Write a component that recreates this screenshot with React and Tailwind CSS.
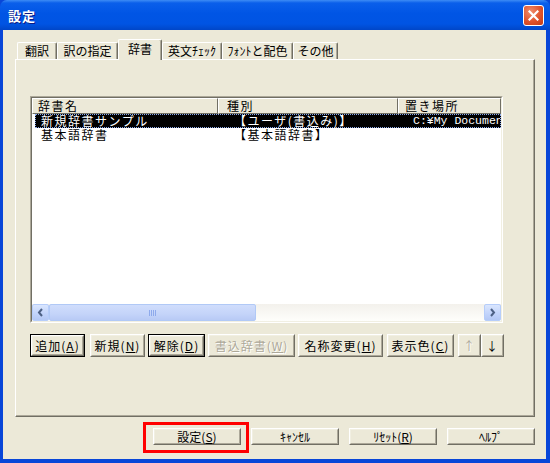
const FONT = "font-['Noto_Sans_CJK_JP','Liberation_Sans',sans-serif]"

const Raised = ({ className = '', dark = false, children }) => (
  <div className={`${dark ? 'border border-black' : ''} ${className}`}>
    <div className="h-full w-full border border-t-white border-l-white border-r-[#716F64] border-b-[#716F64]">
      <div className="h-full w-full flex items-center justify-center border border-t-[#F1EFE2] border-l-[#F1EFE2] border-r-[#ACA899] border-b-[#ACA899] bg-[#ECE9D8]">
        {children}
      </div>
    </div>
  </div>
)

const Off = ({ children }) => (
  <span className="text-[#ACA899] [text-shadow:1px_1px_0_#fff]">{children}</span>
)

const Tab = ({ className, active, children }) =>
  active ? (
    <div className={`relative z-10 -mb-px h-[21px] flex items-start justify-center pt-[1px] bg-[#ECE9D8] border-l border-t border-white border-r border-r-[#716F64] rounded-t-[2px] shadow-[inset_-1px_0_0_#ACA899] ${className}`}>
      {children}
    </div>
  ) : (
    <div className={`h-[17px] flex items-center justify-center bg-[#ECE9D8] border-l border-t border-white border-r border-r-[#716F64] rounded-t-[2px] shadow-[inset_-1px_0_0_#ACA899] ${className}`}>
      {children}
    </div>
  )

const Chevron = ({ dir }) => (
  <svg width="9" height="9" viewBox="0 0 9 9">
    <polyline
      points={dir === 'left' ? '6,1 3,4.5 6,8' : '3,1 6,4.5 3,8'}
      fill="none"
      stroke="#4D6185"
      strokeWidth="2"
    />
  </svg>
)

const ScrollBtn = ({ dir }) => (
  <div className="w-[17px] h-full flex items-center justify-center rounded-[2px] border border-[#B6CDFA] bg-[linear-gradient(to_bottom,#DAE6FE,#C1D3FB_60%,#B3C8F5)]">
    <Chevron dir={dir} />
  </div>
)

export default function App() {
  return (
    <div className={`w-[550px] h-[463px] flex flex-col bg-[#0846D8] ${FONT} text-[12px] leading-none text-black overflow-hidden`}>
      {/* title bar */}
      <div className="h-[30px] shrink-0 flex items-center justify-between pl-[8px] pr-[6px] rounded-t-[7px] bg-[linear-gradient(to_bottom,#3D8CF5_0%,#0A5FEA_10%,#0055E5_45%,#0054E3_80%,#0046C8_100%)]">
        <span className="text-white font-bold text-[13px] [text-shadow:1px_1px_0_#0A1883] tracking-[1px]">設定</span>
        <div className="w-[21px] h-[21px] rounded-[3px] border border-white flex items-center justify-center bg-[radial-gradient(circle_at_35%_30%,#F08D6C,#E0532C_55%,#C23B14)]">
          <svg width="11" height="11" viewBox="0 0 11 11">
            <path d="M1.5 1.5 L9.5 9.5 M9.5 1.5 L1.5 9.5" stroke="#fff" strokeWidth="2.2" strokeLinecap="square" />
          </svg>
        </div>
      </div>

      {/* client area */}
      <div className="flex-1 ml-[3px] mr-[4px] mb-[4px] bg-[#ECE9D8] flex flex-col pl-[12px] pr-[11px] pt-[9px]">
        {/* tabs */}
        <div className="h-[20px] flex items-end ml-[2px]">
          <Tab className="w-[40px]">翻訳</Tab>
          <Tab className="w-[61px]">訳の指定</Tab>
          <Tab className="w-[44px]" active>
            <span className="mt-[2px]">辞書</span>
          </Tab>
          <Tab className="w-[60px]">英文ﾁｪｯｸ</Tab>
          <Tab className="w-[71px]">ﾌｫﾝﾄと配色</Tab>
          <Tab className="w-[45px]">その他</Tab>
        </div>

        {/* panel */}
        <div className="h-[358px] flex flex-col border border-white border-r-[#716F64] border-b-[#716F64] shadow-[inset_-1px_-1px_0_#ACA899] pl-[14px] pt-[36px]">
          {/* list view */}
          <div className="w-[473px] h-[227px] border border-[#ACA899] border-r-white border-b-white">
            <div className="h-full w-full flex flex-col bg-white border border-[#716F64] border-r-[#F1EFE2] border-b-[#F1EFE2] tracking-[1.5px]">
              <div className="h-[16px] shrink-0 flex bg-[#ECE9D8]">
                <div className="w-[186px] h-full flex items-center pl-[5px] border border-t-white border-l-white border-r-[#716F64] border-b-[#716F64]">辞書名</div>
                <div className="w-[180px] h-full flex items-center pl-[8px] border border-t-white border-l-white border-r-[#716F64] border-b-[#716F64]">種別</div>
                <div className="flex-1 h-full flex items-center pl-[6px] border border-t-white border-l-white border-r-[#716F64] border-b-[#716F64]">置き場所</div>
              </div>

              <div className="ml-[3px] h-[14px] flex items-center bg-black text-white border border-dotted border-[#8AA8E8] whitespace-nowrap leading-[12px]">
                <span className="w-[198px] shrink-0 pl-[5px]">新規辞書サンプル</span>
                <span className="w-[179px] shrink-0">【ユーザ(書込み)】</span>
                <span className="flex-1 min-w-0 overflow-hidden font-['Liberation_Mono',monospace] text-[11.5px] tracking-[0px]">C:¥My Documents</span>
              </div>
              <div className="ml-[3px] h-[13px] flex items-center whitespace-nowrap leading-[12px]">
                <span className="w-[199px] shrink-0 pl-[6px]">基本語辞書</span>
                <span className="w-[179px] shrink-0">【基本語辞書】</span>
              </div>

              <div className="flex-1" />

              {/* horizontal scrollbar */}
              <div className="h-[17px] shrink-0 flex bg-[linear-gradient(to_bottom,#F3F1EC,#FEFEFB)] tracking-normal">
                <ScrollBtn dir="left" />
                <div className="w-[207px] h-full rounded-[2px] border border-[#B1C9F6] bg-[linear-gradient(to_bottom,#D0DDFC,#C4D4F9_60%,#B8CAF5)] flex items-center justify-center gap-[1px]">
                  <div className="w-[1px] h-[6px] bg-[#8EAAEC]" />
                  <div className="w-[1px] h-[6px] bg-[#8EAAEC]" />
                  <div className="w-[1px] h-[6px] bg-[#8EAAEC]" />
                  <div className="w-[1px] h-[6px] bg-[#8EAAEC]" />
                </div>
                <div className="flex-1" />
                <ScrollBtn dir="right" />
              </div>
            </div>
          </div>

          {/* list buttons */}
          <div className="mt-[11px] h-[23px] flex tracking-[1px] whitespace-nowrap">
            <Raised dark className="w-[55px] h-full">追加(<u>A</u>)</Raised>
            <Raised className="w-[55px] h-full ml-[5px]">新規(<u>N</u>)</Raised>
            <Raised dark className="w-[57px] h-full ml-[3px]">解除(<u>D</u>)</Raised>
            <Raised className="w-[87px] h-full ml-[3px]"><Off>書込辞書(<u>W</u>)</Off></Raised>
            <Raised className="w-[85px] h-full ml-[3px]">名称変更(<u>H</u>)</Raised>
            <Raised className="w-[67px] h-full ml-[4px]">表示色(<u>C</u>)</Raised>
            <Raised className="w-[23px] h-full ml-[4px]"><Off>↑</Off></Raised>
            <Raised className="w-[23px] h-full">↓</Raised>
          </div>
        </div>

        {/* dialog buttons */}
        <div className="mt-[11px] h-[17px] flex justify-end gap-[10px]">
          <div className="relative w-[88px] h-full">
            <Raised className="w-full h-full">設定(<u>S</u>)</Raised>
            <div className="absolute -left-[10px] -right-[8px] -top-[6px] -bottom-[8px] border-[3px] border-[#FF0000]" />
          </div>
          <Raised className="w-[88px] h-full">ｷｬﾝｾﾙ</Raised>
          <Raised className="w-[88px] h-full">ﾘｾｯﾄ(<u>R</u>)</Raised>
          <Raised className="w-[88px] h-full">ﾍﾙﾌﾟ</Raised>
        </div>
      </div>
    </div>
  )
}
